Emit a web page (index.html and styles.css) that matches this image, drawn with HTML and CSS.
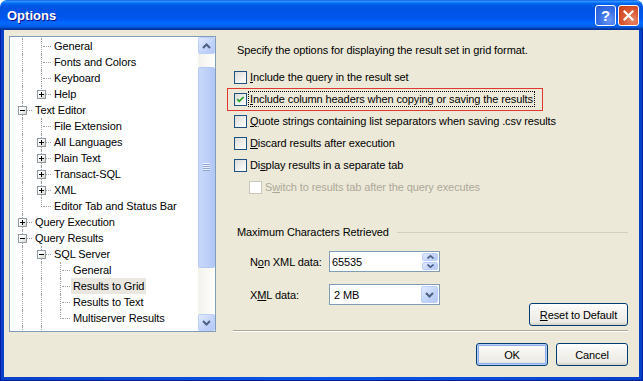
FILE: index.html
```html
<!doctype html>
<html lang="en">
  <head>
    <meta charset="UTF-8" />
    <meta name="viewport" content="width=device-width, initial-scale=1.0" />
    <title>Options</title>
    <link rel="stylesheet" href="styles.css">
  </head>
  <body>
    <div class="window">
      <div class="titlebar">
        <span class="title">Options</span>
        <span class="caption-btns">
          <span class="cap-btn help">?</span>
          <span class="cap-btn close">
            <svg width="13" height="13" viewBox="0 0 13 13">
              <path d="M2.5 2.5 L10.5 10.5 M10.5 2.5 L2.5 10.5" stroke="#fff" stroke-width="2.2" stroke-linecap="square" />
            </svg>
          </span>
        </span>
      </div>

      <div class="frame">
        <div class="client">
          <div class="main">
            <!-- tree of option pages -->
            <div class="tree">
              <div class="tree-rows">
                <div class="node"><i class="g v"></i><i class="g t"></i><span class="label">General</span></div>
                <div class="node"><i class="g v"></i><i class="g t"></i><span class="label">Fonts and Colors</span></div>
                <div class="node"><i class="g v"></i><i class="g t"></i><span class="label">Keyboard</span></div>
                <div class="node"><i class="g v"></i><i class="g l"><b class="exp plus"></b></i><span class="label">Help</span></div>
                <div class="node"><i class="g t"><b class="exp"></b></i><span class="label">Text Editor</span></div>
                <div class="node"><i class="g v"></i><i class="g t"></i><span class="label">File Extension</span></div>
                <div class="node"><i class="g v"></i><i class="g t"><b class="exp plus"></b></i><span class="label">All Languages</span></div>
                <div class="node"><i class="g v"></i><i class="g t"><b class="exp plus"></b></i><span class="label">Plain Text</span></div>
                <div class="node"><i class="g v"></i><i class="g t"><b class="exp plus"></b></i><span class="label">Transact-SQL</span></div>
                <div class="node"><i class="g v"></i><i class="g t"><b class="exp plus"></b></i><span class="label">XML</span></div>
                <div class="node"><i class="g v"></i><i class="g l"></i><span class="label">Editor Tab and Status Bar</span></div>
                <div class="node"><i class="g t"><b class="exp plus"></b></i><span class="label">Query Execution</span></div>
                <div class="node"><i class="g t"><b class="exp"></b></i><span class="label">Query Results</span></div>
                <div class="node"><i class="g v"></i><i class="g t"><b class="exp"></b></i><span class="label">SQL Server</span></div>
                <div class="node"><i class="g v"></i><i class="g v"></i><i class="g t"></i><span class="label">General</span></div>
                <div class="node"><i class="g v"></i><i class="g v"></i><i class="g t"></i><span class="label selected">Results to Grid</span></div>
                <div class="node"><i class="g v"></i><i class="g v"></i><i class="g t"></i><span class="label">Results to Text</span></div>
                <div class="node"><i class="g v"></i><i class="g v"></i><i class="g l"></i><span class="label">Multiserver Results</span></div>
                <div class="node"><i class="g v"></i><i class="g v"></i></div>
              </div>
              <div class="scrollbar">
                <span class="sb-btn">
                  <svg width="9" height="6" viewBox="0 0 9 6"><path d="M1 5 L4.5 1.5 L8 5" fill="none" stroke="#4d6185" stroke-width="2" /></svg>
                </span>
                <span class="sb-track"><span class="sb-thumb"></span></span>
                <span class="sb-btn">
                  <svg width="9" height="6" viewBox="0 0 9 6"><path d="M1 1 L4.5 4.5 L8 1" fill="none" stroke="#4d6185" stroke-width="2" /></svg>
                </span>
              </div>
            </div>

            <!-- Results to Grid page -->
            <div class="pane">
              <p class="desc">Specify the options for displaying the result set in grid format.</p>

              <div class="checks">
                <div class="check"><span class="box"></span><span class="cap"><u>I</u>nclude the query in the result set</span></div>
                <div class="check hl">
                  <span class="box checked">
                    <svg width="11" height="11" viewBox="0 0 11 11"><path d="M2.2 5.2 L4.3 7.3 L8.6 3" fill="none" stroke="#21a121" stroke-width="1.7" /></svg>
                  </span>
                  <span class="cap focus"><u>I</u>nclude column headers when copying or saving the results</span>
                </div>
                <div class="check"><span class="box"></span><span class="cap"><u>Q</u>uote strings containing list separators when saving .csv results</span></div>
                <div class="check"><span class="box"></span><span class="cap"><u>D</u>iscard results after execution</span></div>
                <div class="check"><span class="box"></span><span class="cap">Di<u>s</u>play results in a separate tab</span></div>
                <div class="check sub disabled"><span class="box"></span><span class="cap">S<u>w</u>itch to results tab after the query executes</span></div>
              </div>

              <div class="group-head"><span>Maximum Characters Retrieved</span></div>

              <div class="field">
                <span class="field-label">N<u>o</u>n XML data:</span>
                <span class="input">
                  <span class="value">65535</span>
                  <span class="spin">
                    <span class="spin-btn"><svg width="7" height="4" viewBox="0 0 7 4"><path d="M0.5 3.5 L3.5 0.8 L6.5 3.5" fill="none" stroke="#4d6185" stroke-width="1.6" /></svg></span>
                    <span class="spin-btn"><svg width="7" height="4" viewBox="0 0 7 4"><path d="M0.5 0.5 L3.5 3.2 L6.5 0.5" fill="none" stroke="#4d6185" stroke-width="1.6" /></svg></span>
                  </span>
                </span>
              </div>
              <div class="field">
                <span class="field-label">X<u>M</u>L data:</span>
                <span class="input combo">
                  <span class="value">2 MB</span>
                  <span class="drop-btn"><svg width="9" height="6" viewBox="0 0 9 6"><path d="M1 1 L4.5 4.5 L8 1" fill="none" stroke="#4d6185" stroke-width="2" /></svg></span>
                </span>
              </div>

              <div class="reset-row">
                <button class="btn reset"><u>R</u>eset to Default</button>
              </div>

              <div class="separator"></div>
            </div>
          </div>

          <div class="footer">
            <button class="btn default">OK</button>
            <button class="btn">Cancel</button>
          </div>
        </div>
      </div>
    </div>
  </body>
</html>
```

FILE: styles.css
```css
* {
  margin: 0;
  padding: 0;
  box-sizing: border-box;
}

html {
  background: #fff;
}

body {
  font-family: "Liberation Sans", Tahoma, sans-serif;
  font-size: 11px;
  letter-spacing: -0.1px;
  color: #000;
  width: 643px;
  height: 381px;
  overflow: hidden;
}

u {
  text-decoration: underline;
  text-underline-offset: 1px;
}

.window {
  height: 381px;
  display: flex;
  flex-direction: column;
}

/* title bar, XP blue */
.titlebar {
  height: 30px;
  flex: none;
  display: flex;
  align-items: center;
  justify-content: space-between;
  padding: 0 4px 0 7px;
  border-radius: 7px 7px 0 0;
  background: linear-gradient(
    #0058ee 0%,
    #3a93ff 4%,
    #288eff 6%,
    #127dff 8%,
    #036ffc 10%,
    #0262ee 14%,
    #0057e5 20%,
    #0054e3 24%,
    #0055eb 56%,
    #005bf5 66%,
    #026afe 76%,
    #0062ef 86%,
    #0052d6 92%,
    #0040ab 94%,
    #003092 100%
  );
}

.title {
  color: #fff;
  font-weight: 700;
  font-size: 13px;
  letter-spacing: 0;
  text-shadow: 1px 1px #0f1089;
  padding-top: 1px;
}

.caption-btns {
  display: flex;
  gap: 2px;
}

.cap-btn {
  width: 21px;
  height: 21px;
  border: 1px solid #fff;
  border-radius: 3px;
  display: flex;
  align-items: center;
  justify-content: center;
  color: #fff;
  font-weight: 700;
  font-size: 15px;
}

.cap-btn.help {
  background: radial-gradient(circle at 70% 75%, #6a98f5 0%, #3c72e6 45%, #2258d6 100%);
}

.cap-btn.close {
  background: radial-gradient(circle at 70% 75%, #e88a6c 0%, #dc5a36 45%, #c63d17 100%);
}

.frame {
  flex: 1;
  display: flex;
  padding: 0 4px 4px;
  background: linear-gradient(90deg, #0841c9, #0a55e6 50%, #0841c9);
  box-shadow: inset 1px 0 #001ea0, inset -1px 0 #001ea0, inset 0 -1px #001ea0;
}

.client {
  flex: 1;
  background: #ece9d8;
  padding: 6px 11px 0 5px;
  display: flex;
  flex-direction: column;
}

.main {
  display: grid;
  grid-template-columns: 207px 1fr;
  column-gap: 11px;
  height: 296px;
}

/* tree view */
.tree {
  border: 1px solid #7f9db9;
  background: #fff;
  display: flex;
  overflow: hidden;
}

.tree-rows {
  flex: 1;
  padding: 1px 0 0 3px;
  overflow: hidden;
}

.node {
  display: flex;
  height: 16px;
  white-space: nowrap;
}

.g {
  width: 19px;
  height: 16px;
  flex: none;
  position: relative;
}

.g::before,
.g::after {
  content: "";
  position: absolute;
}

.g.v::before,
.g.t::before {
  left: 9px;
  top: 0;
  bottom: 0;
  border-left: 1px dotted #a0a0a0;
}

.g.l::before {
  left: 9px;
  top: 0;
  height: 9px;
  border-left: 1px dotted #a0a0a0;
}

.g.t::after,
.g.l::after {
  left: 11px;
  top: 8px;
  width: 8px;
  border-top: 1px dotted #a0a0a0;
}

.exp {
  position: absolute;
  left: 5px;
  top: 4px;
  width: 9px;
  height: 9px;
  border: 1px solid #8c9ba6;
  background: linear-gradient(135deg, #fff 30%, #d8d4c8);
  z-index: 1;
}

.exp::before {
  content: "";
  position: absolute;
  left: 1px;
  top: 3px;
  width: 5px;
  height: 1px;
  background: #000;
}

.exp.plus::after {
  content: "";
  position: absolute;
  left: 3px;
  top: 1px;
  width: 1px;
  height: 5px;
  background: #000;
}

.label {
  margin-left: 1px;
  padding: 0 2px;
  line-height: 16px;
}

.label.selected {
  background: #e9e7df;
}

.scrollbar {
  width: 17px;
  flex: none;
  display: flex;
  flex-direction: column;
  background: linear-gradient(90deg, #f3f1ec, #fefefb);
}

.sb-btn {
  height: 17px;
  flex: none;
  display: flex;
  align-items: center;
  justify-content: center;
  border: 1px solid #bccff8;
  border-radius: 2px;
  background: linear-gradient(135deg, #e2eafd, #c1d3fb 60%, #b4c8f6);
}

.sb-track {
  flex: 1;
  position: relative;
}

.sb-thumb {
  position: absolute;
  left: 0;
  right: 0;
  top: 13px;
  height: 201px;
  border: 1px solid #b4c8f6;
  border-radius: 2px;
  background: linear-gradient(90deg, #c9d8fc, #bccff8 60%, #b2c6f5);
}

.sb-thumb::after {
  content: "";
  position: absolute;
  left: 4px;
  width: 7px;
  top: 95px;
  height: 8px;
  background: repeating-linear-gradient(#eef3fe 0 1px, #8ca4d8 1px 2px);
}

/* right page */
.pane {
  display: flex;
  flex-direction: column;
  padding-left: 7px;
}

.desc {
  margin: 7px 0 0 3px;
  line-height: 14px;
}

.checks {
  margin-top: 9px;
  display: flex;
  flex-direction: column;
}

.check {
  height: 22px;
  display: flex;
  align-items: center;
  align-self: flex-start;
  position: relative;
}

.check.sub {
  padding-left: 15px;
}

.box {
  width: 13px;
  height: 13px;
  flex: none;
  border: 1px solid #1c5180;
  background: linear-gradient(135deg, #dcdcd7, #fff);
  display: flex;
  align-items: center;
  justify-content: center;
}

.cap {
  margin-left: 1px;
  padding: 0 1px;
  line-height: 14px;
  border: 1px solid transparent;
}

.cap.focus {
  border: 1px dotted #000;
}

.check.disabled .box {
  border-color: #cac8bb;
  background: #fff;
}

.check.disabled .cap {
  color: #aca899;
}

/* red annotation box */
.check.hl::after {
  content: "";
  position: absolute;
  left: -7px;
  right: -8px;
  top: 0;
  bottom: -1px;
  border: 1px solid #e0362e;
}

.group-head {
  margin: 27px 0 0 3px;
  display: flex;
  align-items: center;
  gap: 8px;
  line-height: 14px;
}

.group-head::after {
  content: "";
  flex: 1;
  height: 1px;
  background: #d0d0bf;
}

.field {
  display: flex;
  align-items: center;
  margin-top: 12px;
  padding-left: 16px;
}

.field-label {
  width: 79px;
}

.input {
  width: 111px;
  height: 21px;
  border: 1px solid #7f9db9;
  background: #fff;
  display: flex;
  align-items: center;
  justify-content: space-between;
  padding: 1px 1px 1px 2px;
}

.combo .value {
  padding-left: 2px;
}

.spin {
  width: 16px;
  height: 100%;
  display: flex;
  flex-direction: column;
  gap: 1px;
}

.spin-btn,
.drop-btn {
  border: 1px solid #bccff8;
  border-radius: 2px;
  background: linear-gradient(135deg, #e2eafd, #c1d3fb 60%, #b4c8f6);
  display: flex;
  align-items: center;
  justify-content: center;
}

.spin-btn {
  flex: 1;
}

.drop-btn {
  width: 17px;
  height: 100%;
}

.reset-row {
  display: flex;
  justify-content: flex-end;
  margin-top: -2px;
}

.btn {
  font-family: inherit;
  font-size: 11px;
  letter-spacing: inherit;
  height: 23px;
  border: 1px solid #003c74;
  border-radius: 3px;
  background: linear-gradient(#fff, #f4f3ee 40%, #ecebe6 85%, #d6d0c5);
  color: #000;
}

.btn.reset {
  width: 99px;
}

.btn.default {
  box-shadow: inset 0 0 0 1px #b9d1f6, inset 0 0 0 2px #8caceb;
}

.separator {
  margin-top: auto;
  height: 2px;
  border-top: 1px solid #aca899;
  border-bottom: 1px solid #fff;
  margin-left: -1px;
}

.footer {
  display: flex;
  justify-content: flex-end;
  gap: 8px;
  margin-top: 11px;
}

.footer .btn {
  width: 72px;
}
```
